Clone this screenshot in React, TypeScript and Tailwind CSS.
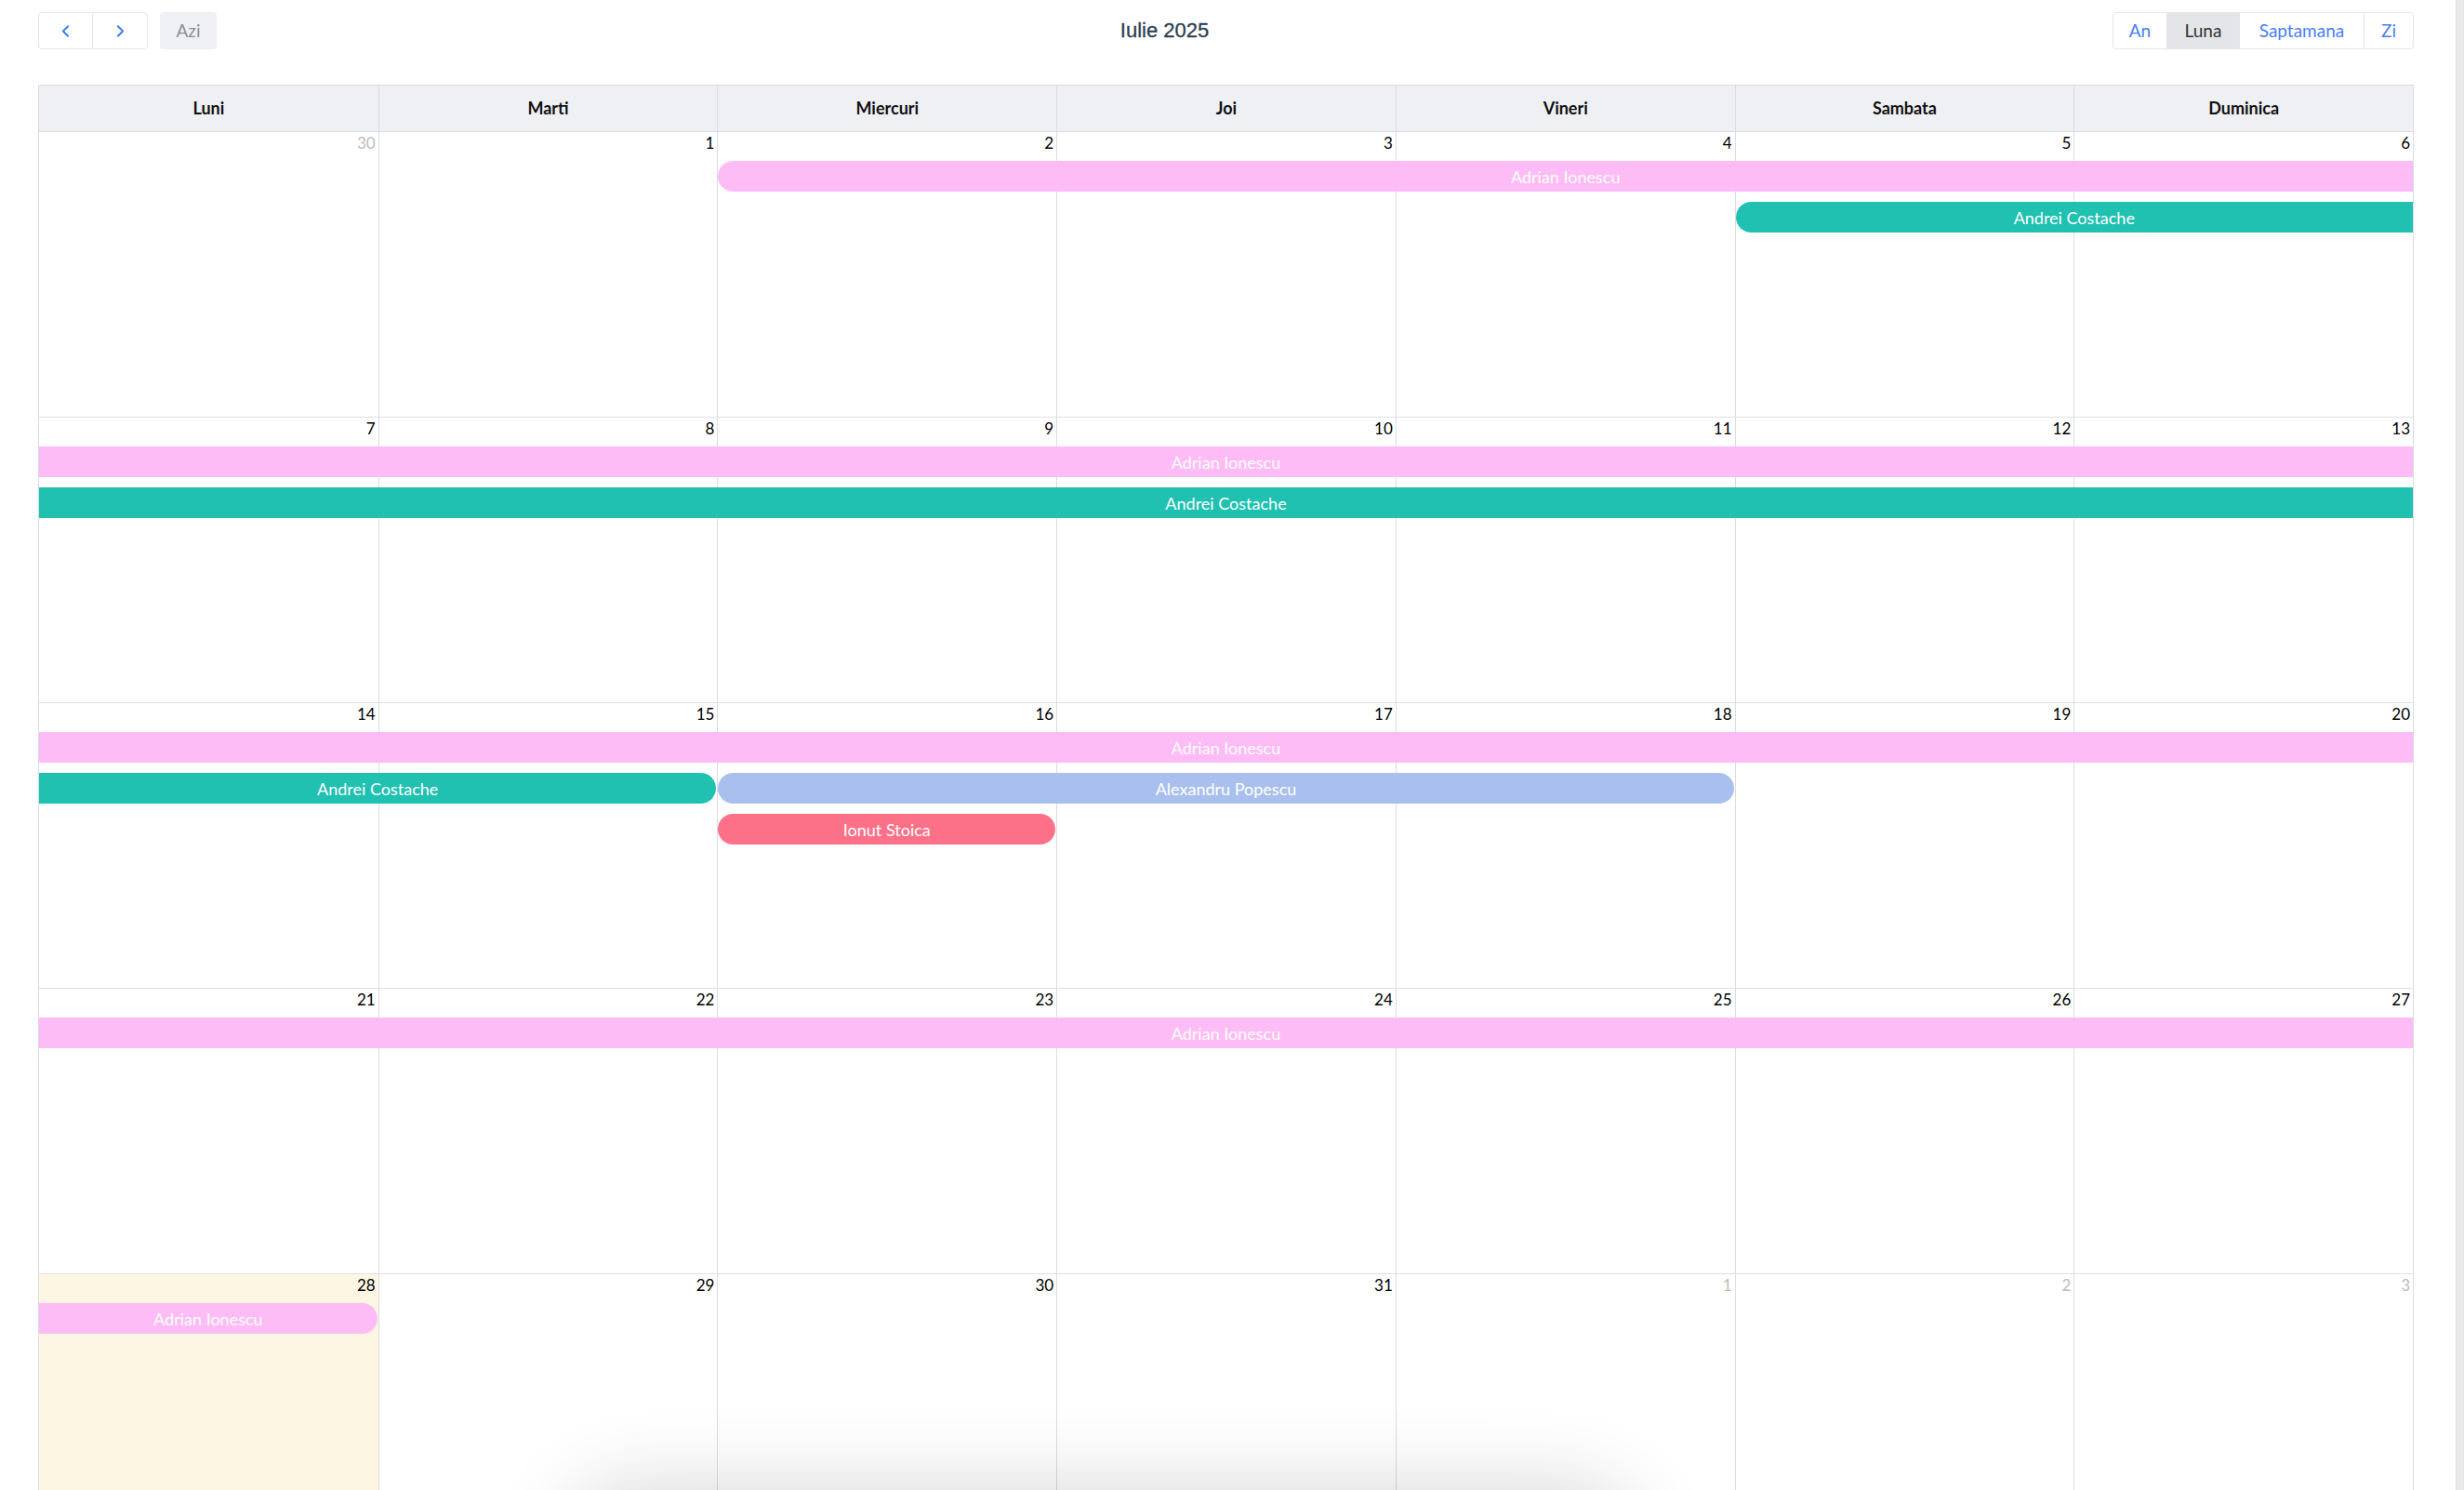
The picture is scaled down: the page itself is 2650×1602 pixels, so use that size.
import React from "react";
import { ChevronLeft, ChevronRight } from "lucide-react";

type Ev = {
  col: number;
  span: number;
  row: number;
  label: string;
  color: string;
  roundL: boolean;
  roundR: boolean;
};

type Week = {
  days: { n: number; other?: boolean; today?: boolean }[];
  events: Ev[];
};

const PINK = "bg-[#fdbcf5]";
const TEAL = "bg-[#20c1b1]";
const BLUE = "bg-[#a9c0ee]";
const RED = "bg-[#fd7188]";

const colStart: Record<number, string> = {
  0: "col-start-1",
  1: "col-start-2",
  2: "col-start-3",
  3: "col-start-4",
  4: "col-start-5",
  5: "col-start-6",
  6: "col-start-7",
};

const colSpan: Record<number, string> = {
  1: "col-span-1",
  2: "col-span-2",
  3: "col-span-3",
  4: "col-span-4",
  5: "col-span-5",
  6: "col-span-6",
  7: "col-span-7",
};

const rowStart: Record<number, string> = {
  1: "row-start-1",
  2: "row-start-2",
  3: "row-start-3",
};

const weeks: Week[] = [
  {
    days: [
      { n: 30, other: true },
      { n: 1 },
      { n: 2 },
      { n: 3 },
      { n: 4 },
      { n: 5 },
      { n: 6 },
    ],
    events: [
      { col: 2, span: 5, row: 1, label: "Adrian Ionescu", color: PINK, roundL: true, roundR: false },
      { col: 5, span: 2, row: 2, label: "Andrei Costache", color: TEAL, roundL: true, roundR: false },
    ],
  },
  {
    days: [7, 8, 9, 10, 11, 12, 13].map((n) => ({ n })),
    events: [
      { col: 0, span: 7, row: 1, label: "Adrian Ionescu", color: PINK, roundL: false, roundR: false },
      { col: 0, span: 7, row: 2, label: "Andrei Costache", color: TEAL, roundL: false, roundR: false },
    ],
  },
  {
    days: [14, 15, 16, 17, 18, 19, 20].map((n) => ({ n })),
    events: [
      { col: 0, span: 7, row: 1, label: "Adrian Ionescu", color: PINK, roundL: false, roundR: false },
      { col: 0, span: 2, row: 2, label: "Andrei Costache", color: TEAL, roundL: false, roundR: true },
      { col: 2, span: 3, row: 2, label: "Alexandru Popescu", color: BLUE, roundL: true, roundR: true },
      { col: 2, span: 1, row: 3, label: "Ionut Stoica", color: RED, roundL: true, roundR: true },
    ],
  },
  {
    days: [21, 22, 23, 24, 25, 26, 27].map((n) => ({ n })),
    events: [
      { col: 0, span: 7, row: 1, label: "Adrian Ionescu", color: PINK, roundL: false, roundR: false },
    ],
  },
  {
    days: [
      { n: 28, today: true },
      { n: 29 },
      { n: 30 },
      { n: 31 },
      { n: 1, other: true },
      { n: 2, other: true },
      { n: 3, other: true },
    ],
    events: [
      { col: 0, span: 1, row: 1, label: "Adrian Ionescu", color: PINK, roundL: false, roundR: true },
    ],
  },
];

const dayNames = ["Luni", "Marti", "Miercuri", "Joi", "Vineri", "Sambata", "Duminica"];

function EventBar({ ev }: { ev: Ev }) {
  return (
    <div
      className={[
        colStart[ev.col],
        colSpan[ev.span],
        rowStart[ev.row],
        ev.color,
        ev.roundL ? "rounded-l-[17px] ml-px" : "",
        ev.roundR ? "rounded-r-[17px] mr-px" : "",
        "h-[33px] flex items-center justify-center text-white text-[18px] leading-none whitespace-nowrap overflow-hidden",
      ].join(" ")}
    >
      {ev.label}
    </div>
  );
}

function WeekRow({ week, last }: { week: Week; last: boolean }) {
  return (
    <div className={"relative " + (last ? "h-[320px]" : "h-[307px] border-b border-[#dde0e6]")}>
      <div className="grid grid-cols-7 h-full">
        {week.days.map((d, i) => (
          <div
            key={i}
            className={[
              "h-full flex justify-end pr-[3px]",
              i > 0 ? "border-l border-[#dcdde2]" : "",
              d.today ? "bg-[#fdf6e2]" : "",
            ].join(" ")}
          >
            <span
              className={
                "text-[17px] leading-[24px] " + (d.other ? "text-[#bdbdbd]" : "text-black")
              }
            >
              {d.n}
            </span>
          </div>
        ))}
      </div>
      <div className="absolute inset-x-0 top-[31px] grid grid-cols-7 gap-y-[11px]">
        {week.events.map((ev, i) => (
          <EventBar key={i} ev={ev} />
        ))}
      </div>
    </div>
  );
}

export default function App() {
  return (
    <div className="min-h-screen bg-white pl-[41px] font-['Lato',sans-serif] text-black">
      <div className="w-[2555px]">
        <div className="flex items-center justify-between pt-[13px] h-[53px]">
          <div className="flex items-center gap-[13px]">
            <div className="flex h-[40px] border border-[#e4e6ea] rounded-[4px] overflow-hidden">
              <button className="w-[58px] flex items-center justify-center text-[#3b7cf5] border-r border-[#e4e6ea]">
                <ChevronLeft size={21} strokeWidth={2.2} />
              </button>
              <button className="w-[58px] flex items-center justify-center text-[#3b7cf5]">
                <ChevronRight size={21} strokeWidth={2.2} />
              </button>
            </div>
            <button className="h-[40px] w-[61px] rounded-[4px] bg-[#eef0f3] text-[#8b9099] text-[19px]">
              Azi
            </button>
          </div>
          <h2 className="font-['Liberation_Sans',Arial,sans-serif] text-[22px] font-medium text-[#2c3e50] leading-none [-webkit-text-stroke:0.3px_#2c3e50]">
            Iulie 2025
          </h2>
          <div className="flex h-[40px] border border-[#e4e6ea] rounded-[4px] overflow-hidden text-[19px]">
            <button className="w-[57px] text-[#4a7ef6]">An</button>
            <button className="w-[79px] bg-[#e4e5e8] text-[#333]">Luna</button>
            <button className="w-[134px] text-[#4a7ef6] border-r border-[#e4e6ea]">Saptamana</button>
            <button className="w-[52px] text-[#4a7ef6]">Zi</button>
          </div>
        </div>

        <div className="mt-[38px] border-x border-t border-[#dcdde2]">
          <div className="grid grid-cols-7 h-[50px] bg-[#eff0f4] border-b border-[#d9dbe1]">
            {dayNames.map((d, i) => (
              <div
                key={d}
                className={
                  "flex items-center justify-center text-[18px] font-bold text-[#111] " +
                  (i > 0 ? "border-l border-[#dcdde2]" : "")
                }
              >
                {d}
              </div>
            ))}
          </div>
          {weeks.map((w, i) => (
            <WeekRow key={i} week={w} last={i === weeks.length - 1} />
          ))}
        </div>
      </div>

      {/* floating panel just below the fold, only its shadow shows */}
      <div className="fixed left-[640px] top-[1630px] w-[1090px] h-[80px] rounded-[40px] bg-white shadow-[0_0_90px_30px_rgba(0,0,0,0.16)]" />

      {/* scroll track along the right edge */}
      <div className="fixed right-0 top-0 bottom-0 w-[9px] bg-[#e9e9e9] border-l border-[#dedede]" />
    </div>
  );
}
